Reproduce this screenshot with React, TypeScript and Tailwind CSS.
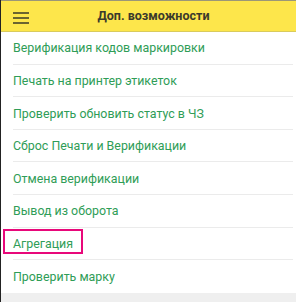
import React from 'react';

const items = [
  'Верификация кодов маркировки',
  'Печать на принтер этикеток',
  'Проверить обновить статус в ЧЗ',
  'Сброс Печати и Верификации',
  'Отмена верификации',
  'Вывод из оборота',
  'Агрегация',
  'Проверить марку',
];

export default function App() {
  return (
    <div className="w-[296px] h-[302px] bg-[#efefef] border-l border-[#222] font-['Roboto',sans-serif] overflow-hidden">
      {/* Header */}
      <div className="h-[32px] bg-[#fde64b] border-t border-[#9b9777] border-b border-b-[#d9cb5c] flex items-center relative">
        <div className="absolute left-[12px] top-[11px] flex flex-col gap-[3.5px]">
          <span className="block w-[16px] h-[1.5px] bg-[#6b6430]" />
          <span className="block w-[16px] h-[1.5px] bg-[#6b6430]" />
          <span className="block w-[16px] h-[1.5px] bg-[#6b6430]" />
        </div>
        <div className="flex-1 text-center text-[12.5px] font-bold text-[#3b3a2c] pl-[10px]">
          Доп. возможности
        </div>
      </div>

      {/* List */}
      <div className="bg-white pr-[3px]">
        {items.map((item, i) => (
          <div key={item} className="pl-[12px] h-[32.6px] relative">
            <div
              className={
                'h-full flex items-center pt-[2px] text-[12.4px] text-[#2f9d57] ' +
                (i < items.length - 1 ? 'border-b border-[#ebebeb]' : '')
              }
            >
              {item}
            </div>
            {item === 'Агрегация' && (
              <div className="absolute left-[2px] top-[1px] w-[80px] h-[25px] border-2 border-[#e8087a]" />
            )}
          </div>
        ))}
      </div>
    </div>
  );
}
